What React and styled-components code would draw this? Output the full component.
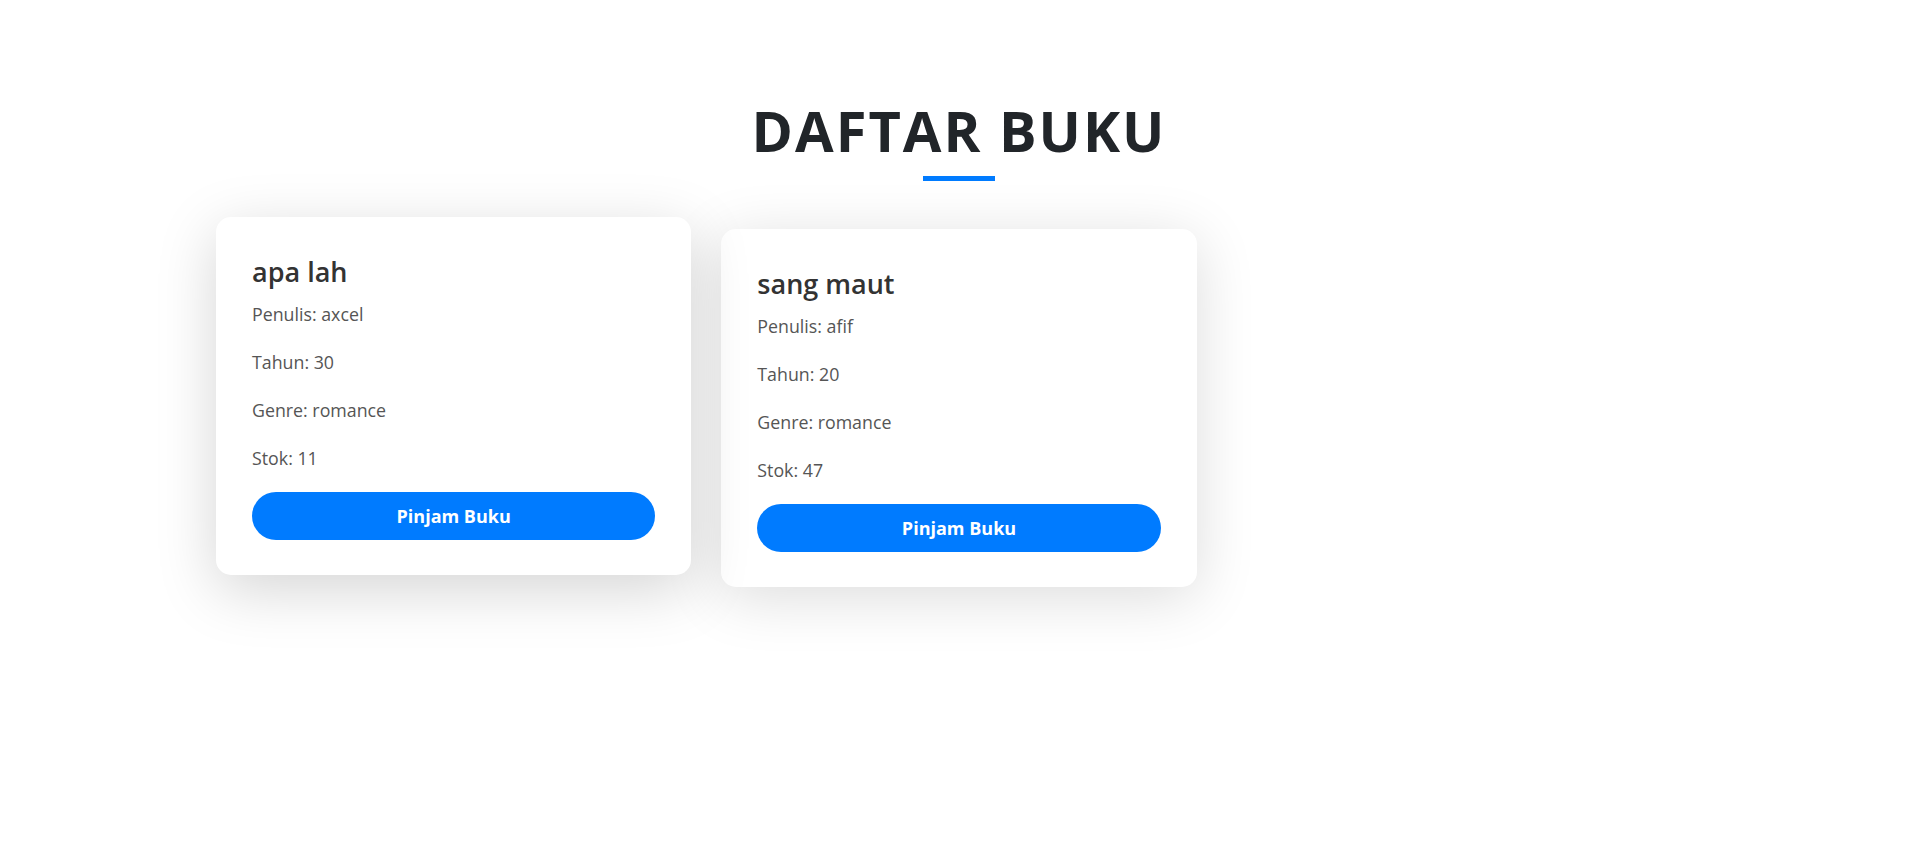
import React from 'react';
import styled, { createGlobalStyle } from 'styled-components';

const GlobalStyle = createGlobalStyle`
  body {
    margin: 0;
    background: #ffffff;
    font-family: "Open Sans", "Noto Sans", sans-serif;
  }
`

const Page = styled.div`
  display: flex;
  flex-direction: column;
  align-items: center;
  padding-top: 97px;
  min-height: 100vh;
  box-sizing: border-box;
`

const Heading = styled.h1`
  margin: 0;
  font-size: 56px;
  line-height: 1.2;
  font-weight: 700;
  letter-spacing: 2px;
  color: #212529;
`

const Underline = styled.div`
  width: 72px;
  height: 5px;
  margin-top: 12px;
  background-color: #007bff;
`

const BookGrid = styled.div`
  display: grid;
  grid-template-columns: repeat(3, 1fr);
  gap: 30px;
  width: 1486px;
  margin-top: 48px;
  align-items: start;
`

const Card = styled.div`
  display: flex;
  flex-direction: column;
  padding: 36px 36px 35px;
  background-color: #ffffff;
  border-radius: 15px;
  box-shadow: ${props => props.$raised
    ? '0 15px 60px rgba(0, 0, 0, 0.17)'
    : '0 10px 60px rgba(0, 0, 0, 0.14)'};
  transform: ${props => props.$raised ? 'translateY(-12px)' : 'none'};
  transition: transform 0.3s, box-shadow 0.3s;
`

const BookTitle = styled.h3`
  margin: 0 0 10px;
  padding-top: 1px;
  font-size: 27px;
  line-height: 36px;
  font-weight: 600;
  color: #333333;
`

const Info = styled.p`
  margin: 0 0 20px;
  font-size: 17.8px;
  line-height: 28px;
  color: #555555;
`

const BorrowButton = styled.button`
  height: 48px;
  border: none;
  border-radius: 24px;
  background-color: #007bff;
  color: #ffffff;
  font-family: "Open Sans", "Noto Sans", sans-serif;
  font-size: 18px;
  font-weight: 700;
  cursor: pointer;
`

const books = [
  { judul: 'apa lah', penulis: 'axcel', tahun: 30, genre: 'romance', stok: 11 },
  { judul: 'sang maut', penulis: 'afif', tahun: 20, genre: 'romance', stok: 47 },
];

function App() {
  return (
    <Page>
      <GlobalStyle />
      <Heading>DAFTAR BUKU</Heading>
      <Underline />
      <BookGrid>
        {books.map((book, index) => (
          <Card key={index} $raised={index === 0}>
            <BookTitle>{book.judul}</BookTitle>
            <Info>Penulis: {book.penulis}</Info>
            <Info>Tahun: {book.tahun}</Info>
            <Info>Genre: {book.genre}</Info>
            <Info>Stok: {book.stok}</Info>
            <BorrowButton>Pinjam Buku</BorrowButton>
          </Card>
        ))}
      </BookGrid>
    </Page>
  )
}

export default App;
